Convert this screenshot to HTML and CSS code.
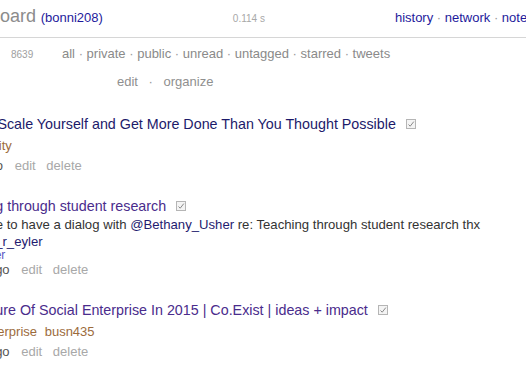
FILE: index.html
```html
<!DOCTYPE html>
<html lang="en">
<head>
    <meta charset="UTF-8">
    <meta name="viewport" content="width=device-width, initial-scale=1.0">
    <title>Pinboard (bonni208)</title>
    <link rel="stylesheet" href="styles.css">
</head>
<body>
    <div class="page">
        <div class="banner">
            <div class="logo">
                <a class="site" href="#">Pinboard</a>
                <a class="user" href="#">(bonni208)</a>
            </div>
            <span class="timer">0.114 s</span>
            <nav class="top-nav">
                <a href="#">history</a> · <a href="#">network</a> · <a href="#">notes</a>
            </nav>
        </div>

        <div class="subnav">
            <span class="count">8639</span>
            <nav class="filters">
                <a href="#">all</a> · <a href="#">private</a> · <a href="#">public</a> · <a href="#">unread</a> · <a href="#">untagged</a> · <a href="#">starred</a> · <a href="#">tweets</a>
            </nav>
        </div>

        <div class="tools">
            <a href="#">edit</a>
            <span class="sep">·</span>
            <a href="#">organize</a>
        </div>

        <div class="bookmarks">
            <div class="bookmark">
                <div class="title-row">
                    <a class="title" href="#">How To Scale Yourself and Get More Done Than You Thought Possible</a>
                    <svg class="mark" width="10" height="10" viewBox="0 0 10 10"><rect x="0.5" y="0.5" width="9" height="9" fill="#f4f4f4" stroke="#b5b5b5"/><path d="M2.5 5.5 L4.2 7.2 L7.8 2.6" fill="none" stroke="#8a8a8a" stroke-width="1"/></svg>
                </div>
                <div class="tags"><a href="#">productivity</a></div>
                <div class="meta">
                    <span class="when">1 day ago</span>
                    <a href="#">edit</a>
                    <a href="#">delete</a>
                </div>
            </div>

            <div class="bookmark">
                <div class="title-row">
                    <a class="title visited" href="#">Teaching through student research</a>
                    <svg class="mark" width="10" height="10" viewBox="0 0 10 10"><rect x="0.5" y="0.5" width="9" height="9" fill="#f4f4f4" stroke="#b5b5b5"/><path d="M2.5 5.5 L4.2 7.2 L7.8 2.6" fill="none" stroke="#8a8a8a" stroke-width="1"/></svg>
                </div>
                <div class="description">
                    We'd love to have a dialog with <a href="#">@Bethany_Usher</a> re: Teaching through student research thx<br>
                    <a href="#">@peggy_r_eyler</a>
                </div>
                <div class="source"><a href="#">from twitter</a></div>
                <div class="meta">
                    <span class="when">2 days ago</span>
                    <a href="#">edit</a>
                    <a href="#">delete</a>
                </div>
            </div>

            <div class="bookmark">
                <div class="title-row">
                    <a class="title visited" href="#">The Future Of Social Enterprise In 2015 | Co.Exist | ideas + impact</a>
                    <svg class="mark" width="10" height="10" viewBox="0 0 10 10"><rect x="0.5" y="0.5" width="9" height="9" fill="#f4f4f4" stroke="#b5b5b5"/><path d="M2.5 5.5 L4.2 7.2 L7.8 2.6" fill="none" stroke="#8a8a8a" stroke-width="1"/></svg>
                </div>
                <div class="tags"><a href="#">socialenterprise</a> <a href="#">busn435</a></div>
                <div class="meta">
                    <span class="when">2 days ago</span>
                    <a href="#">edit</a>
                    <a href="#">delete</a>
                </div>
            </div>
        </div>
    </div>
</body>
</html>
```

FILE: styles.css
```css
* {
    box-sizing: border-box;
}
body {
    margin: 0;
    font-family: 'Liberation Sans', Arial, Helvetica, sans-serif;
    font-size: 13px;
    color: #333;
    background: #fff;
    overflow: hidden;
}
a {
    text-decoration: none;
}
.page {
    margin-left: -54px;
    width: 640px;
}
.banner {
    display: flex;
    align-items: baseline;
    height: 38px;
    padding: 6px 0 0 18px;
    border-bottom: 1px solid #d6d6d6;

    .site {
        font-size: 18px;
        color: #8c8c8c;
    }
    .user {
        color: #1e1a9c;
        margin-left: 1px;
    }
}
.timer {
    font-size: 10px;
    color: #a8a8a8;
    margin-left: 130px;
}
.top-nav {
    margin-left: 130px;
    color: #999;

    a {
        color: #1e1a9c;
    }
}
.subnav {
    display: flex;
    align-items: baseline;
    padding: 7px 0 0 65px;
    line-height: 17px;

    .count {
        font-size: 10px;
        color: #a0a0a0;
        width: 51px;
    }
}
.filters {
    color: #999;

    a {
        color: #8a8a8a;
    }
}
.tools {
    padding: 10px 0 0 171px;
    line-height: 17px;

    a {
        color: #8f8f8f;
    }
    .sep {
        color: #999;
        margin: 0 7px;
    }
}
.bookmarks {
    padding-top: 24px;
}
.bookmark {
    margin-bottom: 20px;
}
.title-row {
    display: flex;
    align-items: center;
    gap: 10px;
    line-height: 20px;

    .title {
        font-size: 14.3px;
        color: #1c1a6a;
    }
    .title.visited {
        color: #4a2c8c;
    }
    .mark {
        flex: none;
    }
}
.description {
    font-size: 13.15px;
    line-height: 17px;
    color: #333;

    a {
        color: #1f1c70;
    }
}
.source {
    font-size: 12px;
    line-height: 10px;

    a {
        color: #5a58c4;
    }
}
.tags {
    margin-top: 2px;
    line-height: 20px;

    a {
        color: #9c6b3c;
        margin-right: 4px;
    }
}
.meta {
    line-height: 20px;

    .when {
        color: #555;
        margin-right: 8px;
    }
    a {
        color: #a8a8a8;
        margin-right: 7px;
    }
}
```
